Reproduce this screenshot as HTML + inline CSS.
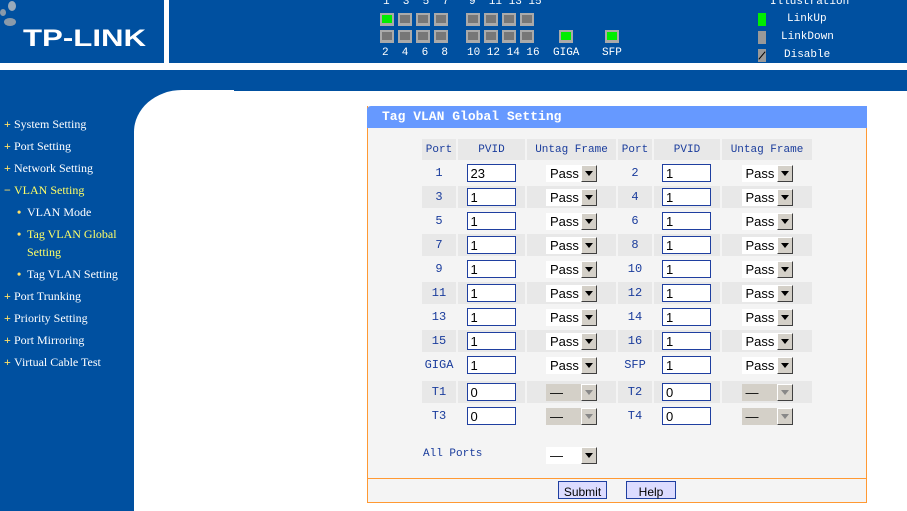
<!DOCTYPE html>
<html><head><meta charset="utf-8"><style>
*{margin:0;padding:0;box-sizing:border-box}
body{width:907px;height:511px;overflow:hidden;background:#fff;position:relative;font-family:"Liberation Serif",serif}
.a{position:absolute}
.blue{background:#0050a0}
.pt{position:absolute;width:14px;height:13px;background:#aaa}
.pt i{position:absolute;left:2px;top:2px;width:10px;height:8px;background:#777}
.lbl{position:absolute;color:#fff;font:11px "Liberation Mono",monospace;letter-spacing:0px}
.nav{position:absolute;left:4px;color:#fff;font-size:12px;line-height:18px}
.nav b{color:#ffe066;font-weight:bold;display:inline-block;width:10px}
.y{color:#ffff66}
table{position:absolute;left:420px;top:137px;border-collapse:separate;border-spacing:2px}
td{height:22px;text-align:center;font:12px "Liberation Mono",monospace;color:#1a3c9c;padding:0}
tr.h td{height:21px;background:#e8e8e8;font-size:11px}
tr.s td{background:#e8e8e8}
.in{display:inline-block;width:49px;height:18px;border:1px solid #1f3fa0;background:#fff;text-align:left;font:13px "Liberation Sans",sans-serif;color:#000;padding-left:3px;line-height:18px;vertical-align:middle;margin-left:-1px}
.sel{display:inline-block;width:51px;height:17px;background:#fff;position:relative;text-align:left;font:13px "Liberation Sans",sans-serif;color:#000;padding-left:4px;line-height:18px;vertical-align:middle}
.sel i{position:absolute;right:0;top:0;width:16px;height:17px;background:#d4d0c8;border:1px solid;border-color:#fff #404040 #404040 #fff}
.sel i:after{content:"";position:absolute;left:3px;top:5px;border:4px solid transparent;border-top:5px solid #000;border-bottom:0}
.sel.d{background:#d4d0c8}
.sel.d i:after{border-top-color:#888}
</style></head><body>
<div class="a blue" style="left:0;top:0;width:164px;height:63px"></div>
<div class="a blue" style="left:169px;top:0;width:738px;height:63px"></div>
<div class="a blue" style="left:0;top:70px;width:907px;height:21px"></div>
<div class="a blue" style="left:0;top:90px;width:134px;height:421px"></div>
<div class="a blue" style="left:134px;top:90px;width:50px;height:50px"></div>
<div class="a" style="left:134px;top:90px;width:100px;height:100px;background:#fff;border-top-left-radius:48px 42px"></div>
<div class="a" style="left:0;top:0;width:22px;height:32px">
<div class="a" style="left:8px;top:1px;width:8px;height:10px;border-radius:50%;background:#9ab"></div>
<div class="a" style="left:0px;top:9px;width:6px;height:7px;border-radius:50%;background:#8a9aaa"></div>
<div class="a" style="left:4px;top:18px;width:12px;height:8px;border-radius:50%;background:#8a9aaa"></div></div>
<div class="a" style="left:23px;top:25px;color:#fff;font:bold 24px 'Liberation Sans',sans-serif;transform:scaleX(1.3);transform-origin:left">TP-LINK</div>

<div class="lbl" style="left:383px;top:-4px">1&nbsp;&nbsp;3&nbsp;&nbsp;5&nbsp;&nbsp;7</div>
<div class="lbl" style="left:469px;top:-4px">9&nbsp;&nbsp;11&nbsp;13&nbsp;15</div>
<div class="pt" style="left:380px;top:13px"><i style="background:#00ee00"></i></div>
<div class="pt" style="left:398px;top:13px"><i></i></div><div class="pt" style="left:416px;top:13px"><i></i></div><div class="pt" style="left:434px;top:13px"><i></i></div>
<div class="pt" style="left:466px;top:13px"><i></i></div><div class="pt" style="left:484px;top:13px"><i></i></div><div class="pt" style="left:502px;top:13px"><i></i></div><div class="pt" style="left:520px;top:13px"><i></i></div>
<div class="pt" style="left:380px;top:30px"><i></i></div><div class="pt" style="left:398px;top:30px"><i></i></div><div class="pt" style="left:416px;top:30px"><i></i></div><div class="pt" style="left:434px;top:30px"><i></i></div>
<div class="pt" style="left:466px;top:30px"><i></i></div><div class="pt" style="left:484px;top:30px"><i></i></div><div class="pt" style="left:502px;top:30px"><i></i></div><div class="pt" style="left:520px;top:30px"><i></i></div>
<div class="pt" style="left:559px;top:30px"><i style="background:#00ee00"></i></div>
<div class="pt" style="left:605px;top:30px"><i style="background:#00ee00"></i></div>
<div class="lbl" style="left:382px;top:47px">2&nbsp;&nbsp;4&nbsp;&nbsp;6&nbsp;&nbsp;8</div>
<div class="lbl" style="left:467px;top:47px">10&nbsp;12&nbsp;14&nbsp;16</div>
<div class="lbl" style="left:553px;top:47px">GIGA</div>
<div class="lbl" style="left:602px;top:47px">SFP</div>
<div class="lbl" style="left:770px;top:-4px">Illustration</div>
<div class="a" style="left:758px;top:13px;width:8px;height:13px;background:#00ee00"></div>
<div class="a" style="left:758px;top:31px;width:8px;height:13px;background:#999"></div>
<div class="a" style="left:758px;top:49px;width:8px;height:13px;background:#999"><div class="a" style="left:-1px;top:6px;width:10px;height:1px;background:#000;transform:rotate(-50deg)"></div></div>
<div class="lbl" style="left:787px;top:13px">LinkUp</div>
<div class="lbl" style="left:781px;top:31px">LinkDown</div>
<div class="lbl" style="left:784px;top:49px">Disable</div>

<div class="nav" style="top:115px"><b>+</b>System Setting</div>
<div class="nav" style="top:137px"><b>+</b>Port Setting</div>
<div class="nav" style="top:159px"><b>+</b>Network Setting</div>
<div class="nav y" style="top:181px"><b>−</b>VLAN Setting</div>
<div class="nav" style="top:203px;left:17px"><b>•</b>VLAN Mode</div>
<div class="nav y" style="top:225px;left:17px"><b>•</b>Tag VLAN Global<br><span style="padding-left:10px">Setting</span></div>
<div class="nav" style="top:265px;left:17px"><b>•</b>Tag VLAN Setting</div>
<div class="nav" style="top:287px"><b>+</b>Port Trunking</div>
<div class="nav" style="top:309px"><b>+</b>Priority Setting</div>
<div class="nav" style="top:331px"><b>+</b>Port Mirroring</div>
<div class="nav" style="top:353px"><b>+</b>Virtual Cable Test</div>

<div class="a" style="left:367px;top:106px;width:500px;height:397px;background:#f4f4f4;border:1px solid #ff9933;border-top:0"></div>
<div class="a" style="left:367px;top:106px;width:500px;height:22px;background:#6699ff;border-top-left-radius:4px"></div>
<div class="a" style="left:382px;top:109px;color:#fff;font:bold 13px 'Liberation Mono',monospace">Tag VLAN Global Setting</div>
<div class="a" style="left:367px;top:478px;width:500px;height:1px;background:#ff9933"></div>
<div class="a" style="left:558px;top:481px;width:49px;height:18px;background:#dcdcff;border:1px solid #1f3fa0;font:12px 'Liberation Sans',sans-serif;text-align:center;line-height:20px">Submit</div>
<div class="a" style="left:626px;top:481px;width:50px;height:18px;background:#dcdcff;border:1px solid #1f3fa0;font:12px 'Liberation Sans',sans-serif;text-align:center;line-height:20px">Help</div>

<table>
<colgroup><col style="width:34px"><col style="width:67px"><col style="width:89px"><col style="width:34px"><col style="width:66px"><col style="width:90px"></colgroup>
<tr class="h"><td>Port</td><td>PVID</td><td>Untag Frame</td><td>Port</td><td>PVID</td><td>Untag Frame</td></tr>
<tr><td>1</td><td><span class="in">23</span></td><td><span class="sel">Pass<i></i></span></td><td>2</td><td><span class="in">1</span></td><td><span class="sel">Pass<i></i></span></td></tr>
<tr class="s"><td>3</td><td><span class="in">1</span></td><td><span class="sel">Pass<i></i></span></td><td>4</td><td><span class="in">1</span></td><td><span class="sel">Pass<i></i></span></td></tr>
<tr><td>5</td><td><span class="in">1</span></td><td><span class="sel">Pass<i></i></span></td><td>6</td><td><span class="in">1</span></td><td><span class="sel">Pass<i></i></span></td></tr>
<tr class="s"><td>7</td><td><span class="in">1</span></td><td><span class="sel">Pass<i></i></span></td><td>8</td><td><span class="in">1</span></td><td><span class="sel">Pass<i></i></span></td></tr>
<tr><td>9</td><td><span class="in">1</span></td><td><span class="sel">Pass<i></i></span></td><td>10</td><td><span class="in">1</span></td><td><span class="sel">Pass<i></i></span></td></tr>
<tr class="s"><td>11</td><td><span class="in">1</span></td><td><span class="sel">Pass<i></i></span></td><td>12</td><td><span class="in">1</span></td><td><span class="sel">Pass<i></i></span></td></tr>
<tr><td>13</td><td><span class="in">1</span></td><td><span class="sel">Pass<i></i></span></td><td>14</td><td><span class="in">1</span></td><td><span class="sel">Pass<i></i></span></td></tr>
<tr class="s"><td>15</td><td><span class="in">1</span></td><td><span class="sel">Pass<i></i></span></td><td>16</td><td><span class="in">1</span></td><td><span class="sel">Pass<i></i></span></td></tr>
<tr><td>GIGA</td><td><span class="in">1</span></td><td><span class="sel">Pass<i></i></span></td><td>SFP</td><td><span class="in">1</span></td><td><span class="sel">Pass<i></i></span></td></tr>
<tr><td colspan="6" style="height:1px"></td></tr>
<tr class="s"><td>T1</td><td><span class="in">0</span></td><td><span class="sel d">—<i></i></span></td><td>T2</td><td><span class="in">0</span></td><td><span class="sel d">—<i></i></span></td></tr>
<tr><td>T3</td><td><span class="in">0</span></td><td><span class="sel d">—<i></i></span></td><td>T4</td><td><span class="in">0</span></td><td><span class="sel d">—<i></i></span></td></tr>
</table>
<div class="a" style="left:423px;top:448px;font:11px 'Liberation Mono',monospace;color:#1a3c9c">All Ports</div>
<div class="a" style="left:546px;top:446px"><span class="sel">—<i></i></span></div>
</body></html>
